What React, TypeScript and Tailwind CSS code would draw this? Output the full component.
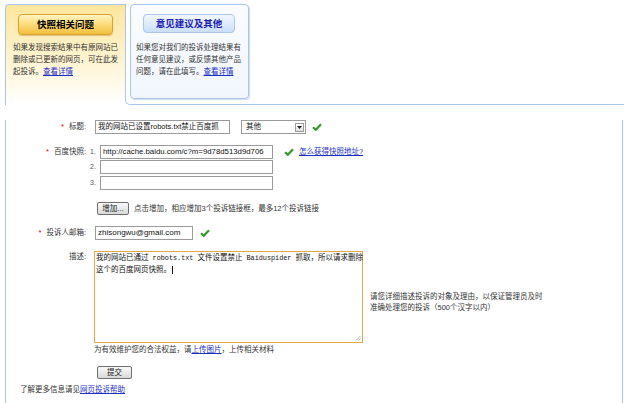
import React from "react";

function Check() {
  return (
    <svg width="10" height="8" viewBox="0 0 10 8" className="shrink-0">
      <path d="M1 4.2 L3.8 6.8 L9 1.2" fill="none" stroke="#36982a" strokeWidth="2.2" />
    </svg>
  );
}

function Req() {
  return <span className="text-[#e60000] mr-[5px]">*</span>;
}

function Label({ req, children }: { req?: boolean; children: React.ReactNode }) {
  return (
    <div className="w-[80px] shrink-0 text-right pr-[1px]">
      {req && <Req />}
      {children}
    </div>
  );
}

function GrayButton({ children, w }: { children: React.ReactNode; w: string }) {
  return (
    <button
      className={`${w} h-[13px] flex items-center justify-center border border-[#6f6f6f] rounded-[2px] bg-gradient-to-b from-[#fafafa] to-[#d9d9d9] text-[7.5px] leading-none text-[#222]`}
    >
      {children}
    </button>
  );
}

function Mono({ children }: { children: React.ReactNode }) {
  return (
    <span className="font-['Liberation_Mono',monospace] text-[6.8px] leading-[11px] whitespace-pre">
      {children}
    </span>
  );
}

function Num({ children }: { children: React.ReactNode }) {
  return <span className="ml-[3px] w-[10px] text-[7px] text-[#555]">{children}</span>;
}

export default function App() {
  return (
    <div className="w-[640px] h-[403px] bg-white overflow-hidden font-['Liberation_Sans','Noto_Sans_CJK_SC',sans-serif] text-[7.5px] leading-[12px] text-[#333]">
      {/* tabs */}
      <div className="flex ml-[5px] mt-[4px] w-[619px]">
        <div className="w-[120px] h-[101px] shrink-0 border-l border-t border-[#a6c6ec] rounded-tl-[4px] bg-gradient-to-b from-[#fde69c] via-[#fff5d6] via-60% to-white">
          <div className="ml-[12px] mt-[9px] w-[95px] h-[21px] flex items-center justify-center rounded-[4px] border border-[#d8a232] bg-gradient-to-b from-[#fff3c0] via-[#fbdc78] to-[#f3be3a] shadow-[0_1px_1px_rgba(150,110,20,0.35)] text-[9.5px] font-bold text-black">
            快照相关问题
          </div>
          <div className="ml-[7px] mt-[7px] leading-[12px]">
            如果发现搜索结果中有原网站已
            <br />
            删除或已更新的网页，可在此发
            <br />
            起投诉。<a className="text-[#1b2fc4] underline">查看详情</a>
          </div>
        </div>
        <div className="flex-1 self-stretch border-l border-b border-[#a6c6ec] rounded-bl-[5px] pl-[4px]">
          <div className="w-[119px] h-[95px] border border-[#a6c6ec] rounded-[4px] bg-gradient-to-b from-[#fafcff] to-[#f1f6fd] shadow-[1px_1px_1px_rgba(120,150,190,0.35)]">
            <div className="ml-[12px] mt-[9px] w-[92px] h-[19px] flex items-center justify-center rounded-[4px] border border-[#a9c6ec] bg-gradient-to-b from-[#f3f8ff] to-[#cadef7] text-[9.5px] font-bold text-[#1d1db5]">
              意见建议及其他
            </div>
            <div className="ml-[5px] mt-[9px] leading-[12px]">
              如果您对我们的投诉处理结果有
              <br />
              任何意见建议，或反馈其他产品
              <br />
              问题，请在此填写。<a className="text-[#1b2fc4] underline">查看详情</a>
            </div>
          </div>
        </div>
      </div>

      {/* panel */}
      <div className="ml-[5px] w-[618px] h-[300px] border-l border-r border-[#a6c6ec] pl-[1px]">
        {/* title */}
        <div className="flex items-center mt-[15px] h-[14px]">
          <Label req>标题:</Label>
          <div className="ml-[8px] w-[135px] h-[14px] border border-[#9a9a9a] px-[2px] text-[7.5px] leading-[12px] whitespace-nowrap overflow-hidden text-[#111]">
            我的网站已设置robots.txt禁止百度抓
          </div>
          <div className="ml-[11px] w-[65px] h-[14px] border border-[#9a9a9a] flex items-center justify-between pl-[4px] pr-[1px]">
            <span className="text-[#111]">其他</span>
            <span className="w-[9px] h-[9px] border border-[#9a9a9a] bg-gradient-to-b from-white to-[#e0e0e0] flex items-center justify-center">
              <svg width="5" height="3" viewBox="0 0 5 3">
                <path d="M0 0 L5 0 L2.5 3 Z" fill="#222" />
              </svg>
            </span>
          </div>
          <div className="ml-[6px]">
            <Check />
          </div>
        </div>

        {/* snapshot */}
        <div className="flex items-center mt-[11px] h-[14px]">
          <Label req>百度快照:</Label>
          <Num>1.</Num>
          <div className="w-[173px] h-[14px] border border-[#9a9a9a] px-[2px] text-[7.8px] leading-[12px] whitespace-nowrap overflow-hidden text-[#111]">
            http://cache.baidu.com/c?m=9d78d513d9d706
          </div>
          <div className="ml-[11px]">
            <Check />
          </div>
          <a className="ml-[5px] text-[#1b2fc4] underline">怎么获得快照地址?</a>
        </div>
        <div className="flex items-center mt-[1px] h-[14px]">
          <Label>{""}</Label>
          <Num>2.</Num>
          <div className="w-[173px] h-[14px] border border-[#9a9a9a]" />
        </div>
        <div className="flex items-center mt-[2px] h-[14px]">
          <Label>{""}</Label>
          <Num>3.</Num>
          <div className="w-[173px] h-[14px] border border-[#9a9a9a]" />
        </div>

        {/* add */}
        <div className="flex items-center mt-[12px] h-[13px]">
          <div className="ml-[90px]">
            <GrayButton w="w-[32px]">增加...</GrayButton>
          </div>
          <span className="ml-[5px]">点击增加，相应增加3个投诉链接框，最多12个投诉链接</span>
        </div>

        {/* email */}
        <div className="flex items-center mt-[11px] h-[14px]">
          <Label req>投诉人邮箱:</Label>
          <div className="ml-[8px] w-[98px] h-[14px] border border-[#9a9a9a] px-[2px] text-[8px] leading-[12px] whitespace-nowrap overflow-hidden text-[#111]">
            zhisongwu@gmail.com
          </div>
          <div className="ml-[7px]">
            <Check />
          </div>
        </div>

        {/* description */}
        <div className="flex mt-[11px]">
          <Label>描述:</Label>
          <div className="relative ml-[7px] w-[269px] h-[92px] border border-[#e0a848] pl-[1px] leading-[11px] text-[#111]">
            <div className="whitespace-nowrap">
              我的网站已通过<Mono> robots.txt </Mono>文件设置禁止<Mono> Baiduspider </Mono>抓取，所以请求删除
            </div>
            <div>
              这个的百度网页快照。<span className="inline-block w-px h-[8px] bg-[#111] align-middle ml-[1px]" />
            </div>
            <svg width="6" height="6" viewBox="0 0 6 6" className="absolute right-[1px] bottom-[1px]">
              <path d="M5.5 1 L1 5.5 M5.5 3.5 L3.5 5.5" stroke="#999" strokeWidth="0.8" />
            </svg>
          </div>
          <div className="ml-[7px] mt-[40px] leading-[11px]">
            请您详细描述投诉的对象及理由，以保证管理员及时
            <br />
            准确处理您的投诉（500个汉字以内）
          </div>
        </div>

        <div className="ml-[87px] mt-[1px]">
          为有效维护您的合法权益，请<a className="text-[#1b2fc4] underline">上传图片</a>，上传相关材料
        </div>

        <div className="ml-[90px] mt-[10px]">
          <GrayButton w="w-[35px]">提交</GrayButton>
        </div>

        <div className="ml-[13px] mt-[5px]">
          了解更多信息请见<a className="text-[#1b2fc4] underline">网页投诉帮助</a>
        </div>
      </div>
    </div>
  );
}
